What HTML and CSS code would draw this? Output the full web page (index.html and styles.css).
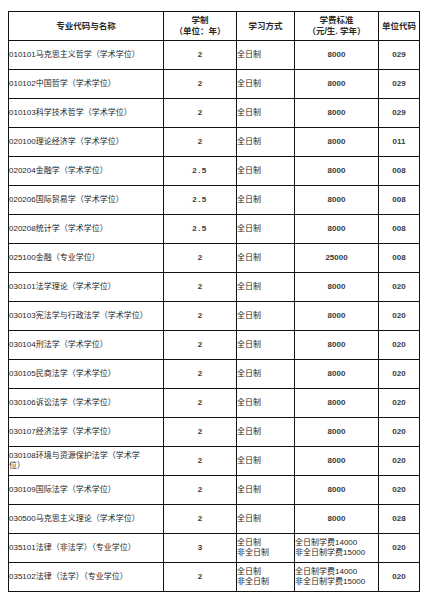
FILE: index.html
```html
<!DOCTYPE html>
<html lang="zh">
<head>
<meta charset="utf-8">
<title>专业目录</title>
<link rel="stylesheet" href="styles.css">
</head>
<body>
<div class="page">
<table class="grid">
<colgroup>
<col class="c-name"><col class="c-len"><col class="c-mode"><col class="c-fee"><col class="c-unit">
</colgroup>
<thead>
<tr>
<th>专业代码与名称</th>
<th>学制<br>（单位：年）</th>
<th>学习方式</th>
<th>学费标准<br>（元/生. 学年）</th>
<th>单位代码</th>
</tr>
</thead>
<tbody>
<tr><td class="name">010101马克思主义哲学（学术学位）</td><td class="num">2</td><td class="mode">全日制</td><td class="num">8000</td><td class="num">029</td></tr>
<tr><td class="name">010102中国哲学（学术学位）</td><td class="num">2</td><td class="mode">全日制</td><td class="num">8000</td><td class="num">029</td></tr>
<tr><td class="name">010103科学技术哲学（学术学位）</td><td class="num">2</td><td class="mode">全日制</td><td class="num">8000</td><td class="num">029</td></tr>
<tr><td class="name">020100理论经济学（学术学位）</td><td class="num">2</td><td class="mode">全日制</td><td class="num">8000</td><td class="num">011</td></tr>
<tr><td class="name">020204金融学（学术学位）</td><td class="num wide">2.5</td><td class="mode">全日制</td><td class="num">8000</td><td class="num">008</td></tr>
<tr><td class="name">020206国际贸易学（学术学位）</td><td class="num wide">2.5</td><td class="mode">全日制</td><td class="num">8000</td><td class="num">008</td></tr>
<tr><td class="name">020208统计学（学术学位）</td><td class="num wide">2.5</td><td class="mode">全日制</td><td class="num">8000</td><td class="num">008</td></tr>
<tr><td class="name">025100金融（专业学位）</td><td class="num">2</td><td class="mode">全日制</td><td class="num">25000</td><td class="num">008</td></tr>
<tr><td class="name">030101法学理论（学术学位）</td><td class="num">2</td><td class="mode">全日制</td><td class="num">8000</td><td class="num">020</td></tr>
<tr><td class="name">030103宪法学与行政法学（学术学位）</td><td class="num">2</td><td class="mode">全日制</td><td class="num">8000</td><td class="num">020</td></tr>
<tr><td class="name">030104刑法学（学术学位）</td><td class="num">2</td><td class="mode">全日制</td><td class="num">8000</td><td class="num">020</td></tr>
<tr><td class="name">030105民商法学（学术学位）</td><td class="num">2</td><td class="mode">全日制</td><td class="num">8000</td><td class="num">020</td></tr>
<tr><td class="name">030106诉讼法学（学术学位）</td><td class="num">2</td><td class="mode">全日制</td><td class="num">8000</td><td class="num">020</td></tr>
<tr><td class="name">030107经济法学（学术学位）</td><td class="num">2</td><td class="mode">全日制</td><td class="num">8000</td><td class="num">020</td></tr>
<tr><td class="name">030108环境与资源保护法学（学术学<br>位）</td><td class="num">2</td><td class="mode">全日制</td><td class="num">8000</td><td class="num">020</td></tr>
<tr><td class="name">030109国际法学（学术学位）</td><td class="num">2</td><td class="mode">全日制</td><td class="num">8000</td><td class="num">020</td></tr>
<tr><td class="name">030500马克思主义理论（学术学位）</td><td class="num">2</td><td class="mode">全日制</td><td class="num">8000</td><td class="num">028</td></tr>
<tr><td class="name">035101法律（非法学）（专业学位）</td><td class="num">3</td><td class="mode">全日制<br>非全日制</td><td class="fee">全日制学费14000<br>非全日制学费15000</td><td class="num">020</td></tr>
<tr><td class="name">035102法律（法学）（专业学位）</td><td class="num">2</td><td class="mode">全日制<br>非全日制</td><td class="fee">全日制学费14000<br>非全日制学费15000</td><td class="num">020</td></tr>
</tbody>
</table>
</div>
</body>
</html>
```

FILE: styles.css
```css
html, body {
  margin: 0;
  padding: 0;
  background: #ffffff;
}

.page {
  padding: 11px 0 0 8px;
}

.grid {
  border-collapse: collapse;
  table-layout: fixed;
  width: 412px;
  font-family: "Liberation Sans", "Noto Sans CJK SC", sans-serif;
  color: #1e1e1e;
}

.c-name { width: 155px; }
.c-len { width: 73px; }
.c-mode { width: 58px; }
.c-fee { width: 84px; }
.c-unit { width: 41px; }

.grid tr {
  height: 29px;
}

.grid th,
.grid td {
  border: 1px solid #111;
  padding: 0;
  vertical-align: middle;
  overflow: hidden;
}

.grid th {
  font-size: 8.5px;
  line-height: 11px;
  font-weight: bold;
  text-align: center;
  color: #2a2a2a;
}

.grid td {
  font-size: 8px;
  line-height: 10px;
}

.name {
  text-align: left;
  padding-left: 1px;
  padding-top: 2px;
}

.mode {
  text-align: left;
  padding-left: 2px;
  padding-top: 1px;
}

.num {
  text-align: center;
  font-weight: bold;
  font-size: 6.5px;
  color: #3a3a3a;
  padding-top: 1px;
}

.num.wide {
  letter-spacing: 1.5px;
}

.fee {
  text-align: left;
  padding-left: 2px;
  padding-top: 1px;
}
```
